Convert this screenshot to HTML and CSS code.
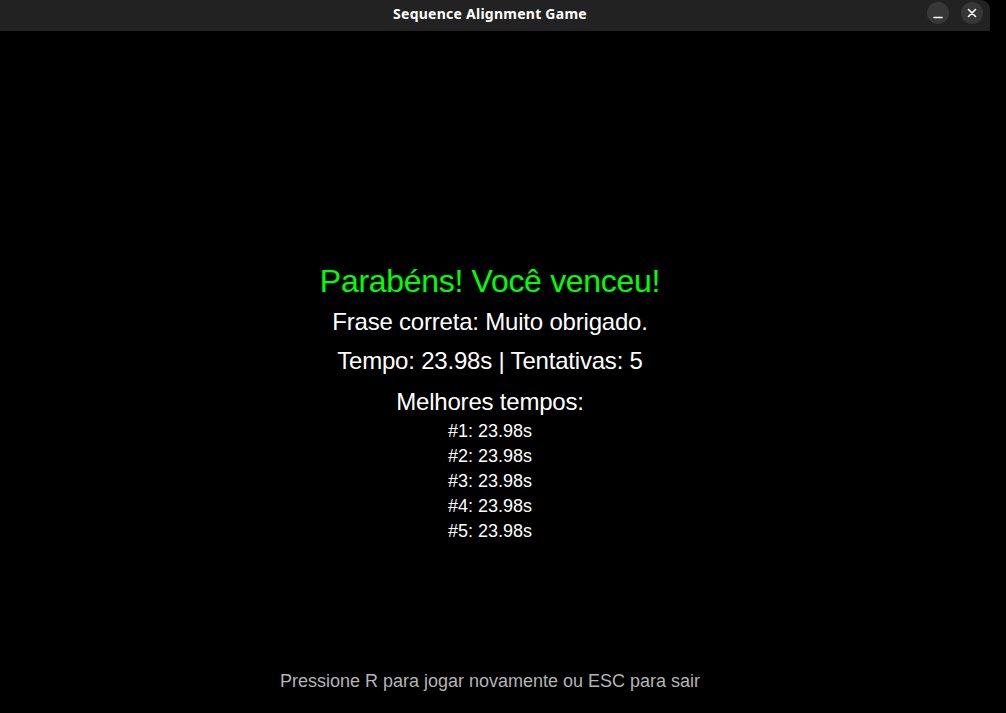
FILE: index.html
```html
<!DOCTYPE html>
<html lang="pt">
<head>
<meta charset="utf-8">
<title>Sequence Alignment Game</title>
<link rel="stylesheet" href="styles.css">
</head>
<body>
<div class="window">
  <header class="titlebar">
    <div class="title">Sequence Alignment Game</div>
    <div class="controls">
      <button class="ctl" aria-label="Minimizar">
        <svg width="22" height="22" viewBox="0 0 22 22"><path d="M7 15.5h8" stroke="#fff" stroke-width="1.6" stroke-linecap="round"/></svg>
      </button>
      <button class="ctl" aria-label="Fechar">
        <svg width="22" height="22" viewBox="0 0 22 22"><path d="M7.5 7.5l7 7M14.5 7.5l-7 7" stroke="#fff" stroke-width="1.6" stroke-linecap="round"/></svg>
      </button>
    </div>
  </header>
  <main class="game">
    <div class="result">
      <div class="win">Parabéns! Você venceu!</div>
      <div class="line">Frase correta: Muito obrigado.</div>
      <div class="line">Tempo: 23.98s | Tentativas: 5</div>
      <div class="line best">Melhores tempos:</div>
      <ol class="scores">
        <li>#1: 23.98s</li>
        <li>#2: 23.98s</li>
        <li>#3: 23.98s</li>
        <li>#4: 23.98s</li>
        <li>#5: 23.98s</li>
      </ol>
    </div>
    <div class="hint">Pressione R para jogar novamente ou ESC para sair</div>
  </main>
</div>
</body>
</html>
```
FILE: styles.css
```css
html, body {
  margin: 0;
  padding: 0;
  background: #000;
  width: 1006px;
  height: 713px;
  overflow: hidden;
}
.window {
  width: 1006px;
  height: 713px;
  display: flex;
  flex-direction: column;
  background: #000;
}
.titlebar {
  width: 990px;
  height: 31px;
  background: #222222;
  border-top-right-radius: 9px;
  position: relative;
  display: flex;
  align-items: flex-start;
  justify-content: flex-start;
  flex: none;
}
.title {
  width: 980px;
  text-align: center;
  color: #fff;
  font-family: "Noto Sans", "DejaVu Sans", sans-serif;
  font-weight: 700;
  font-size: 14px;
  letter-spacing: 0.25px;
  line-height: 28px;
}
.controls {
  position: absolute;
  right: 7px;
  top: 2px;
  display: flex;
  gap: 12px;
}
.ctl {
  width: 22px;
  height: 22px;
  border-radius: 50%;
  background: #373737;
  border: none;
  padding: 0;
  margin: 0;
  display: block;
}
.ctl svg {
  display: block;
}
.game {
  flex: 1;
  width: 980px;
  display: flex;
  flex-direction: column;
  align-items: center;
  font-family: "Liberation Sans", Arial, sans-serif;
  color: #fff;
  padding-top: 229px;
  padding-bottom: 19px;
  box-sizing: border-box;
}
.result {
  display: flex;
  flex-direction: column;
  align-items: center;
}
.win {
  color: #00ff00;
  font-size: 32px;
  line-height: 42px;
  letter-spacing: -0.3px;
}
.line {
  font-size: 24px;
  line-height: 39px;
  letter-spacing: -0.2px;
}
.best {
  line-height: 35px;
  margin-top: 4px;
}
.scores {
  list-style: none;
  margin: 0;
  padding: 0;
  font-size: 18px;
  line-height: 25px;
  text-align: center;
}
.hint {
  margin-top: auto;
  color: #b4b4b4;
  font-size: 18px;
  line-height: 25px;
}
```
